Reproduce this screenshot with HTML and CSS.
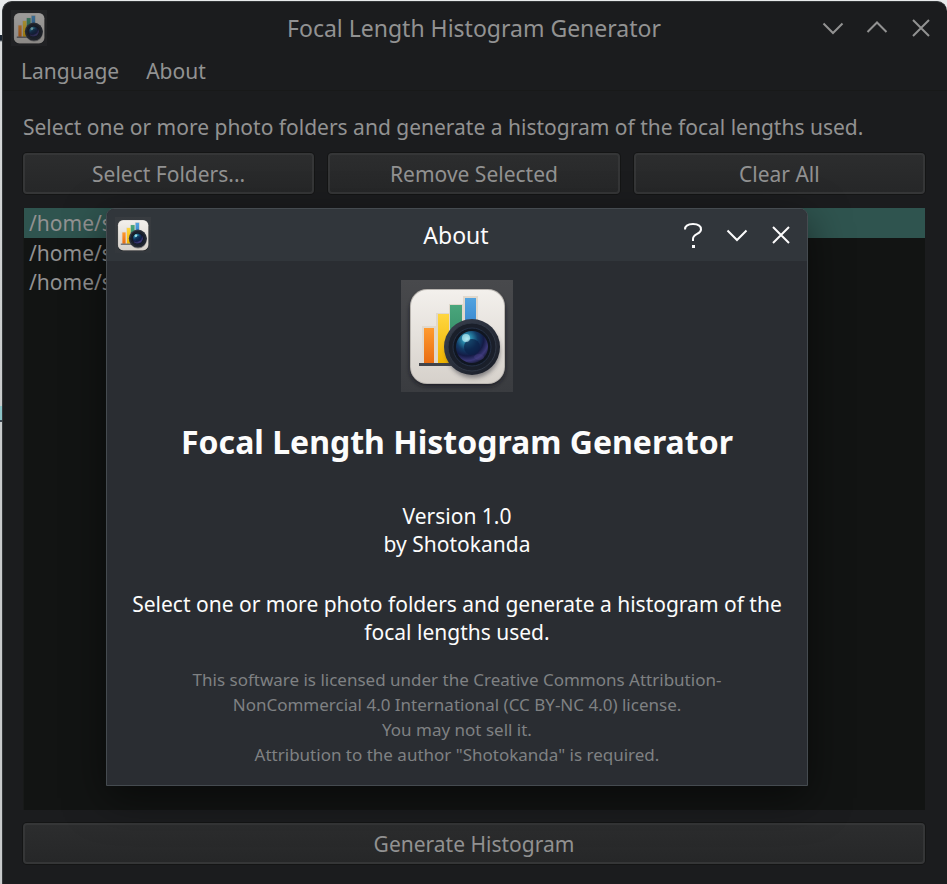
FILE: index.html
```html
<!DOCTYPE html>
<html lang="en">
<head>
<meta charset="utf-8">
<meta name="viewport" content="width=device-width, initial-scale=1">
<title>Focal Length Histogram Generator</title>
<link rel="stylesheet" href="styles.css">
</head>
<body>
<svg class="defs" aria-hidden="true">
  <defs>
    <linearGradient id="tile" x1="0" y1="0" x2="0" y2="1"><stop offset="0" stop-color="#f3f0ec"/><stop offset="1" stop-color="#d6d1cb"/></linearGradient>
    <linearGradient id="backing" x1="0" y1="0" x2="0" y2="1"><stop offset="0" stop-color="#48494c"/><stop offset="1" stop-color="#3a3c40"/></linearGradient>
    <linearGradient id="orange" x1="0" y1="0" x2="0" y2="1"><stop offset="0" stop-color="#ff9a2e"/><stop offset="1" stop-color="#e96d12"/></linearGradient>
    <linearGradient id="yellow" x1="0" y1="0" x2="0" y2="1"><stop offset="0" stop-color="#ffd640"/><stop offset="1" stop-color="#f0b400"/></linearGradient>
    <linearGradient id="green" x1="0" y1="0" x2="0" y2="1"><stop offset="0" stop-color="#4aa67c"/><stop offset="1" stop-color="#2d8560"/></linearGradient>
    <linearGradient id="blue" x1="0" y1="0" x2="0" y2="1"><stop offset="0" stop-color="#52a3df"/><stop offset="1" stop-color="#2f7cc8"/></linearGradient>
    <linearGradient id="rim" x1="0" y1="0" x2="1" y2="1"><stop offset="0" stop-color="#3b4250"/><stop offset="1" stop-color="#171b25"/></linearGradient>
    <radialGradient id="glass" cx=".34" cy=".25" r=".8"><stop offset="0" stop-color="#9be4f0"/><stop offset=".16" stop-color="#2b8fb0"/><stop offset=".42" stop-color="#123c66"/><stop offset=".66" stop-color="#141b45"/><stop offset=".85" stop-color="#3b3878"/><stop offset="1" stop-color="#191c3a"/></radialGradient>
    <filter id="soft" x="-20%" y="-20%" width="140%" height="140%"><feGaussianBlur stdDeviation="2"/></filter>
    <symbol id="app-icon" viewBox="0 0 112 112">
      <rect class="icon-backing" width="112" height="112" fill="url(#backing)"/>
      <rect x="9" y="13" width="95" height="93" rx="17" fill="#16181b" opacity=".75" filter="url(#soft)"/>
      <rect x="9" y="9" width="95" height="95" rx="17" fill="#b9b5b0"/>
      <rect x="10" y="10" width="93" height="93" rx="16" fill="url(#tile)"/>
      <g fill="#e0d8cc"><rect x="21" y="46" width="14" height="37"/><rect x="35" y="33" width="14" height="50"/><rect x="48" y="24" width="14" height="40"/><rect x="62" y="16" width="15" height="40"/></g>
      <rect x="23" y="48" width="10" height="35" fill="url(#orange)"/>
      <rect x="37" y="34" width="11" height="49" fill="url(#yellow)"/>
      <rect x="49" y="25" width="12" height="50" fill="url(#green)"/>
      <rect x="64" y="18" width="11" height="40" fill="url(#blue)"/>
      <rect x="18" y="83" width="40" height="3" fill="#40434a"/>
      <ellipse cx="72" cy="71" rx="27" ry="27" fill="#30323a" opacity=".5" filter="url(#soft)"/>
      <circle cx="71" cy="67" r="28" fill="url(#rim)"/>
      <circle cx="71" cy="67" r="24" fill="#1a1f2a" stroke="#303846"/>
      <circle cx="71" cy="67" r="19" fill="#101621" stroke="#263247"/>
      <circle cx="71" cy="67" r="16" fill="url(#glass)"/>
      <circle cx="71" cy="67" r="8" fill="#0b2147" opacity=".7"/>
      <ellipse cx="65" cy="58" rx="4" ry="4" fill="#b9edf4" opacity=".7"/>
      <ellipse cx="78" cy="77" rx="5" ry="3" fill="#51468b" opacity=".35"/>
    </symbol>
  </defs>
</svg>

<main class="window">
  <header class="titlebar">
    <svg class="titlebar-icon" role="img" aria-label="Application icon"><use href="#app-icon"/></svg>
    <h1 class="titlebar-title">Focal Length Histogram Generator</h1>
    <div class="controls">
      <button class="control" type="button" aria-label="Minimize"><svg viewBox="0 0 24 24"><path d="M2.500 7.500 12 17l9.500-9.500"/></svg></button>
      <button class="control" type="button" aria-label="Maximize"><svg viewBox="0 0 24 24"><path d="M2.500 16 12 6.500 21.500 16"/></svg></button>
      <button class="control" type="button" aria-label="Close"><svg viewBox="0 0 24 24"><path d="M4 4 20 20M20 4 4 20"/></svg></button>
    </div>
  </header>
  <nav class="menubar">
    <button class="menu" type="button">Language</button>
    <button class="menu" type="button">About</button>
  </nav>
  <div class="content">
    <p class="hint">Select one or more photo folders and generate a histogram of the focal lengths used.</p>
    <div class="actions">
      <button class="button" type="button">Select Folders...</button>
      <button class="button" type="button">Remove Selected</button>
      <button class="button" type="button">Clear All</button>
    </div>
    <ul class="folders">
      <li class="folder folder-selected">/home/s</li>
      <li class="folder">/home/s</li>
      <li class="folder">/home/s</li>
    </ul>
    <button class="button" type="button">Generate Histogram</button>
  </div>
</main>

<section class="dialog" role="dialog" aria-labelledby="dialog-title">
  <header class="titlebar dialog-titlebar">
    <svg class="titlebar-icon" aria-hidden="true"><use href="#app-icon"/></svg>
    <h2 class="titlebar-title" id="dialog-title">About</h2>
    <div class="controls">
      <button class="control" type="button" aria-label="Help"><svg viewBox="0 0 24 24"><path d="M4 6.500C4 2.500 7.500 1 12 1s8 1.500 8 5.500c0 5-8 4-8 9.500v2"/><path class="dot" d="M11 22h3v3h-3z"/></svg></button>
      <button class="control" type="button" aria-label="Minimize"><svg viewBox="0 0 24 24"><path d="M2.500 7.500 12 17l9.500-9.500"/></svg></button>
      <button class="control" type="button" aria-label="Close"><svg viewBox="0 0 24 24"><path d="M4 4 20 20M20 4 4 20"/></svg></button>
    </div>
  </header>
  <div class="about">
    <svg class="about-logo" aria-hidden="true"><use href="#app-icon"/></svg>
    <h3 class="about-name">Focal Length Histogram Generator</h3>
    <p class="about-text">Version 1.0<br>by Shotokanda</p>
    <p class="about-text about-summary">Select one or more photo folders and generate a histogram of the focal lengths used.</p>
    <p class="about-license">This software is licensed under the Creative Commons Attribution-<wbr>NonCommercial 4.0 International (CC BY-NC 4.0) license.<br>You may not sell it.<br>Attribution to the author "Shotokanda" is required.</p>
  </div>
</section>
</body>
</html>
```
FILE: styles.css
```css
* { box-sizing: border-box; }

body {
  margin: 0;
  padding: 1px 0 0 2px;
  min-height: 100vh;
  display: flex;
  position: relative;
  background: linear-gradient(#e8eaeb 35px, #1a2430 35px, #1a2430 40px, #d8dadb 42px, #c8cacb 406px, #8cc4c8 406px, #8cc4c8 420px, #3c4650 420px, #3c4650 422px, #c8cacb 422px);
  font-family: "Noto Sans", sans-serif;
  font-size: 21px;
  line-height: 28px;
}

h1, h2, h3, p, ul { margin: 0; padding: 0; font-weight: 400; }
button { font: inherit; color: inherit; margin: 0; padding: 0; border: 0; background: none; }
.defs { position: absolute; width: 0; height: 0; }

.window {
  flex: 1;
  display: flex;
  flex-direction: column;
  background: #1b1c1e;
  border: 1px solid #343739;
  border-width: 1px 0 0 1px;
  border-radius: 10px 10px 0 0;
  color: #929292;
}

.titlebar {
  display: grid;
  grid-template-columns: 1fr auto 1fr;
  align-items: center;
  height: 52px;
  padding: 0 10px 0 8px;
}
.titlebar-icon { width: 36px; height: 36px; --backing: .3; }
.icon-backing { opacity: var(--backing, 1); }
.window .titlebar-icon { opacity: .6; }
.titlebar-title { font-size: 23px; line-height: 32px; }
.controls { display: flex; justify-content: flex-end; gap: 12px; }
.control { width: 32px; height: 32px; display: grid; place-items: center; }
.control svg { width: 24px; height: 24px; overflow: visible; fill: none; stroke: currentColor; stroke-width: 2; }
.control .dot { fill: currentColor; stroke: none; }

.menubar {
  display: flex;
  gap: 27px;
  height: 37px;
  padding: 0 18px;
  border-bottom: 1px solid #181919;
}
.menu { height: 34px; }

.content {
  flex: 1;
  display: flex;
  flex-direction: column;
  padding: 22px 22px 20px 20px;
}
.hint { margin-bottom: 12px; }
.actions { display: grid; grid-template-columns: repeat(3, 1fr); gap: 14px; margin-bottom: 14px; }
.button {
  height: 41px;
  border: 2px solid #353637;
  border-radius: 4px;
  background: linear-gradient(#2c2d2e, #262728);
  box-shadow: 0 0 0 1px #141515;
}
.folders {
  flex: 1;
  list-style: none;
  margin-bottom: 13px;
  border-left: 1px solid #181a19;
  background: #121413;
}
.folder { height: 29px; padding: 0 5px; line-height: 30px; }
.folder-selected { height: 30px; background: #2f544f; }

.dialog {
  position: absolute;
  top: 208px;
  left: 106px;
  right: 139px;
  background: #2a2d32;
  border: 1px solid #454b50;
  border-radius: 8px 8px 0 0;
  box-shadow: 0 12px 40px rgba(0, 0, 0, .5);
  color: #fcfcfc;
}
.dialog-titlebar { background: #31363b; border-radius: 7px 7px 0 0; }
.about {
  display: flex;
  flex-direction: column;
  align-items: center;
  padding: 19px 20px 18px;
  text-align: center;
}
.about-logo { width: 112px; height: 112px; margin-bottom: 28px; }
.about-name { margin-bottom: 38px; font-size: 32px; line-height: 44px; font-weight: 700; }
.about-text { margin-bottom: 32px; }
.about-summary { margin-bottom: 21px; }
.about-license { padding: 0 50px; font-size: 17px; line-height: 25px; color: #7f8183; }
```
